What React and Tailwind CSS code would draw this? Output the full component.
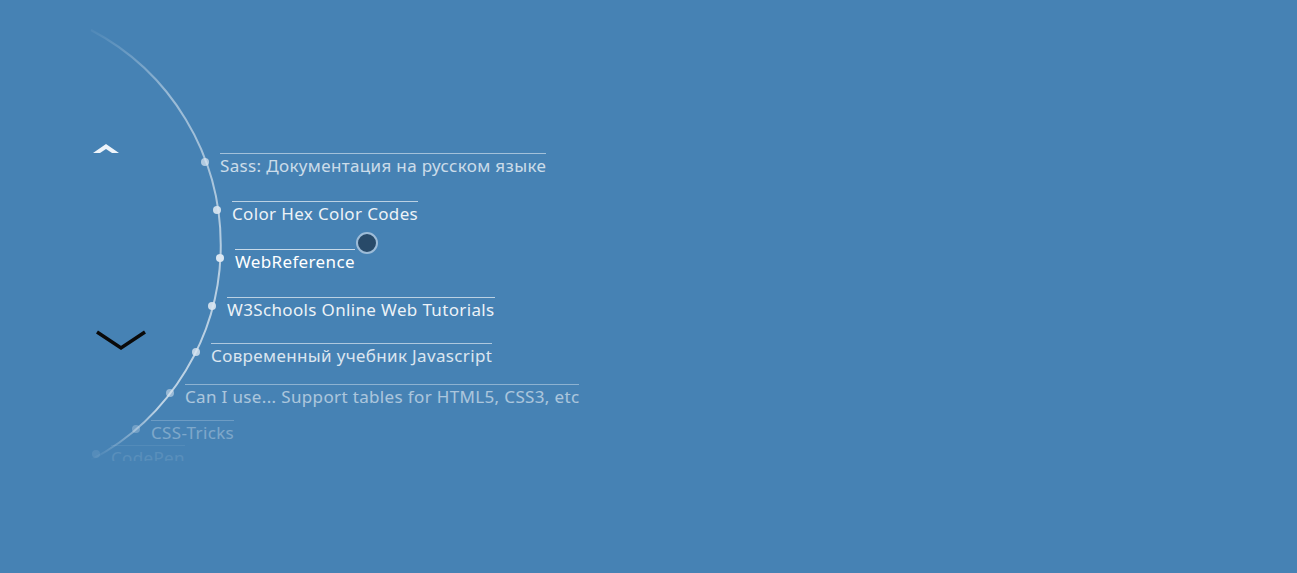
import React from 'react'

const items = [
    { label: 'Sass: Документация на русском языке', x: 205, y: 162, o: 0.72 },
    { label: 'Color Hex Color Codes', x: 217, y: 210, o: 0.9 },
    { label: 'WebReference', x: 220, y: 258, o: 1, active: true },
    { label: 'W3Schools Online Web Tutorials', x: 212, y: 306, o: 0.9 },
    { label: 'Современный учебник Javascript', x: 196, y: 352, o: 0.8 },
    { label: 'Can I use... Support tables for HTML5, CSS3, etc', x: 170, y: 393, o: 0.55 },
    { label: 'CSS-Tricks', x: 136, y: 429, o: 0.3 },
    { label: 'CodePen', x: 96, y: 454, o: 0.1 },
]

const Item = ({ item }) => (
    <div
        className='absolute flex items-start'
        style={{ left: item.x - 4, top: item.y - 9, opacity: item.o }}
    >
        <span className='mt-[5px] w-2 h-2 rounded-full bg-[#dbe7f2] shrink-0'></span>
        <div className='relative ml-[11px] border-t border-white/70 pt-[2px] leading-5 text-[17px] tracking-[0.35px] text-white whitespace-nowrap'>
            {item.label}
            {item.active &&
                <span className='absolute left-[calc(100%+1px)] top-[-18px] w-[22px] h-[22px] rounded-full bg-[#284a69] border-2 border-[#9dbcd8]'></span>
            }
        </div>
    </div>
)

const App = () => {
    return (
        <div className='relative w-full h-[573px] bg-[#4682b4] overflow-hidden' style={{ fontFamily: '"Noto Sans", "Liberation Sans", sans-serif' }}>
            <div className='absolute left-0 top-0 w-[640px] h-[461px] overflow-hidden'>
                <svg className='absolute left-0 top-0' width='640' height='461'>
                    <defs>
                        <linearGradient id='arc' gradientUnits='userSpaceOnUse' x1='0' y1='30' x2='0' y2='460'>
                            <stop offset='0' stopColor='#fff' stopOpacity='0.05' />
                            <stop offset='0.15' stopColor='#fff' stopOpacity='0.45' />
                            <stop offset='0.5' stopColor='#fff' stopOpacity='0.6' />
                            <stop offset='0.88' stopColor='#fff' stopOpacity='0.65' />
                            <stop offset='1' stopColor='#fff' stopOpacity='0' />
                        </linearGradient>
                    </defs>
                    <path d='M91 30 A243 243 0 0 1 91 460' fill='none' stroke='url(#arc)' strokeWidth='2' />
                </svg>
                {items.map((item) => <Item key={item.label} item={item} />)}
            </div>

            <button className='absolute left-[92px] top-[142px] w-[28px] h-[14px]'>
                <svg width='28' height='14' viewBox='0 0 28 14'>
                    <path d='M1 11 L14 2 L27 11 L20 11 L14 7 L8 11 Z' fill='#eef4fa' />
                </svg>
            </button>
            <button className='absolute left-[96px] top-[329px] w-[50px] h-[22px]'>
                <svg width='50' height='22' viewBox='0 0 50 22'>
                    <path d='M1 3 L25 19 L49 3' fill='none' stroke='#0a0a0a' strokeWidth='3.5' />
                </svg>
            </button>
        </div>
    )
}

export default App
